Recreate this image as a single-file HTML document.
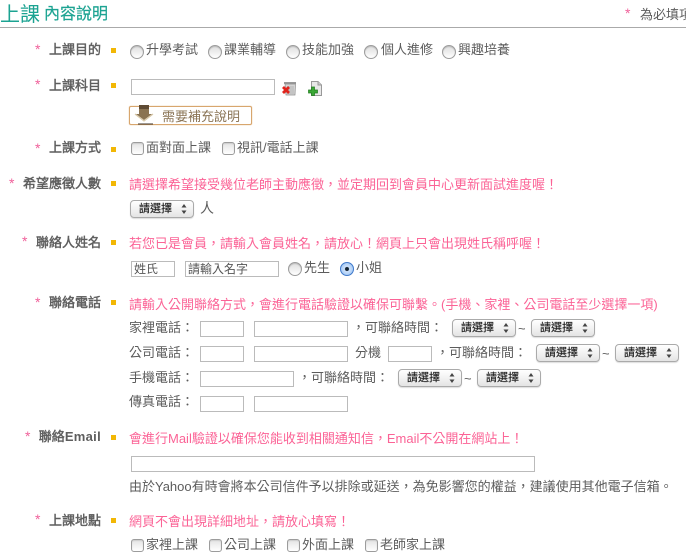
<!DOCTYPE html>
<html lang="zh-Hant">
<head>
<meta charset="utf-8">
<title>上課內容說明</title>
<style>
html,body{margin:0;padding:0;background:#fff;width:686px;height:560px;overflow:hidden}
body{position:relative;font-family:"Liberation Sans","Noto Sans CJK TC",sans-serif;font-size:13px;color:#5c5c5c}
.a,.t,.l,.p,.s,.q,.i,.r,.c,.sel{position:absolute;white-space:nowrap}
.t,.l,.p{height:18px;line-height:18px;margin-top:1px}
.l{right:585px;color:#5e5e5e;text-align:right;-webkit-text-stroke:.45px #5e5e5e}
.l b{letter-spacing:.3px;-webkit-text-stroke:0}
.p{left:129px;color:#fb6396}
.s{width:5px;height:5px;left:111px;background:#f2b705}
.q{color:#f0609a;font-size:14px;width:7px;height:14px;line-height:14px;margin-top:-3px}
.i{box-sizing:border-box;height:16px;border:1px solid #bbb;background:#fff;font-size:12px;line-height:14px;padding-left:2px;color:#555}
.r{box-sizing:border-box;width:14px;height:14px;border-radius:50%;border:1px solid #9c9c9c;background:linear-gradient(#ddd,#fff);box-shadow:inset 0 1px 1px #bbb}
.r.on{border-color:#3f78c9;background:radial-gradient(circle,#123 0,#123 20%,#cfe2fb 28%,#8ebcf0 100%);box-shadow:none}
.c{box-sizing:border-box;width:13px;height:13px;border-radius:3px;border:1px solid #9c9c9c;background:linear-gradient(#e4e4e4,#fff);box-shadow:inset 0 1px 1px #ccc}
.sel{box-sizing:border-box;width:64px;height:18px;border:1px solid #aaa;border-radius:4px;background:linear-gradient(#fff,#f2f2f2 50%,#e4e4e4);box-shadow:0 1px 1px #ddd;font-size:11px;line-height:16px;padding-left:8px;color:#222;-webkit-text-stroke:.15px #222}
.sel svg{position:absolute;left:50px;top:3px}
</style>
</head>
<body>
<span class="t" style="left:0;top:0;height:28px;line-height:28px;font-size:20px;color:#1ca392">上課</span>
<span class="t" style="left:44px;top:2px;height:24px;line-height:24px;font-size:16px;color:#1ca392;-webkit-text-stroke:.2px #1ca392">內容說明</span>
<span class="q" style="left:625px;top:9px">*</span>
<span class="t" style="left:640px;top:5px">為必填項目</span>
<div class="a" style="left:0;top:27px;width:686px;height:1px;background:#aaa"></div>

<span class="q" style="left:35px;top:45px">*</span><span class="l" style="top:40px">上課目的</span><i class="s" style="top:48px"></i>
<i class="r" style="left:130px;top:45px"></i><span class="t" style="left:146px;top:40px">升學考試</span>
<i class="r" style="left:208px;top:45px"></i><span class="t" style="left:224px;top:40px">課業輔導</span>
<i class="r" style="left:286px;top:45px"></i><span class="t" style="left:302px;top:40px">技能加強</span>
<i class="r" style="left:364px;top:45px"></i><span class="t" style="left:381px;top:40px">個人進修</span>
<i class="r" style="left:442px;top:45px"></i><span class="t" style="left:458px;top:40px">興趣培養</span>

<span class="q" style="left:35px;top:80px">*</span><span class="l" style="top:76px">上課科目</span><i class="s" style="top:83px"></i>
<i class="i" style="left:131px;top:79px;width:144px"></i>
<svg class="a" style="left:282px;top:81px" width="15" height="15" viewBox="0 0 15 15"><path d="M2 1h12v2H2z" fill="#999"/><path d="M3 3h10.500L13 14H4z" fill="#d4d4d4" stroke="#8c8c8c" stroke-width=".7"/><path d="M7 5v8M9 5v8M11 5v8" stroke="#aaa" stroke-width=".8"/><path d="M0 7l2-2 2 2 2-2 2 2-2 2 2 2-2 2-2-2-2 2-2-2 2-2z" fill="#e0241c"/></svg>
<svg class="a" style="left:308px;top:81px" width="15" height="15" viewBox="0 0 15 15"><path d="M3.500.5H10L13.500 4v10.500h-10z" fill="#e8e8e8" stroke="#999"/><path d="M10 .5V4h3.500" fill="#ccc" stroke="#999"/><path d="M3.500 6h3v3h3v3h-3v2.500h-3V12H.5V9h3z" fill="#3aa835" stroke="#1f7a1d" stroke-width=".7"/></svg>
<div class="a" style="box-sizing:border-box;left:129px;top:106px;width:123px;height:19px;border:1px solid #d8a66e;border-radius:2px;background:#fff;box-shadow:0 0 1px #d8a66e"></div>
<svg class="a" style="left:134px;top:104px" width="20" height="22" viewBox="0 0 20 22"><path d="M5 1h10v4H5z" fill="#5e4a33"/><path d="M5 5h10v5h3l-8 6-8-6h3z" fill="#8a7352"/><path d="M1 10l9 7 9-7" fill="none" stroke="#d8c8a8" stroke-width="1.200"/><path d="M4 20h15" stroke="#3c3226" stroke-width="1"/></svg>
<span class="t" style="left:162px;top:107px;color:#8a7455">需要補充說明</span>

<span class="q" style="left:35px;top:144px">*</span><span class="l" style="top:138px">上課方式</span><i class="s" style="top:147px"></i>
<i class="c" style="left:131px;top:142px"></i><span class="t" style="left:146px;top:138px">面對面上課</span>
<i class="c" style="left:222px;top:142px"></i><span class="t" style="left:237px;top:138px">視訊/電話上課</span>

<span class="q" style="left:9px;top:179px">*</span><span class="l" style="top:174px">希望應徵人數</span><i class="s" style="top:181px"></i>
<span class="p" style="top:175px">請選擇希望接受幾位老師主動應徵，並定期回到會員中心更新面試進度喔！</span>
<div class="sel" style="left:130px;top:200px">請選擇<svg width="6" height="10"><path d="M3 0l2.500 3.500h-5zM3 10L.5 6.500h5z" fill="#444"/></svg></div>
<span class="t" style="left:200px;top:198px;font-size:14px">人</span>

<span class="q" style="left:22px;top:237px">*</span><span class="l" style="top:233px">聯絡人姓名</span><i class="s" style="top:240px"></i>
<span class="p" style="top:234px">若您已是會員，請輸入會員姓名，請放心！網頁上只會出現姓氏稱呼喔！</span>
<div class="i" style="left:131px;top:261px;width:44px">姓氏</div>
<div class="i" style="left:185px;top:261px;width:94px">請輸入名字</div>
<i class="r" style="left:288px;top:262px"></i><span class="t" style="left:304px;top:258px">先生</span>
<i class="r on" style="left:340px;top:262px"></i><span class="t" style="left:356px;top:258px">小姐</span>

<span class="q" style="left:35px;top:298px">*</span><span class="l" style="top:293px">聯絡電話</span><i class="s" style="top:300px"></i>
<span class="p" style="top:295px">請輸入公開聯絡方式，會進行電話驗證以確保可聯繫。(手機、家裡、公司電話至少選擇一項)</span>

<span class="t" style="left:129px;top:318px">家裡電話：</span>
<i class="i" style="left:200px;top:321px;width:44px"></i><i class="i" style="left:254px;top:321px;width:94px"></i>
<span class="t" style="left:352px;top:318px">，可聯絡時間：</span>
<div class="sel" style="left:452px;top:319px">請選擇<svg width="6" height="10"><path d="M3 0l2.500 3.500h-5zM3 10L.5 6.500h5z" fill="#444"/></svg></div>
<span class="t" style="left:518px;top:319px">~</span>
<div class="sel" style="left:531px;top:319px">請選擇<svg width="6" height="10"><path d="M3 0l2.500 3.500h-5zM3 10L.5 6.500h5z" fill="#444"/></svg></div>

<span class="t" style="left:129px;top:343px">公司電話：</span>
<i class="i" style="left:200px;top:346px;width:44px"></i><i class="i" style="left:254px;top:346px;width:94px"></i>
<span class="t" style="left:355px;top:343px">分機</span>
<i class="i" style="left:388px;top:346px;width:44px"></i>
<span class="t" style="left:436px;top:343px">，可聯絡時間：</span>
<div class="sel" style="left:536px;top:344px">請選擇<svg width="6" height="10"><path d="M3 0l2.500 3.500h-5zM3 10L.5 6.500h5z" fill="#444"/></svg></div>
<span class="t" style="left:602px;top:344px">~</span>
<div class="sel" style="left:615px;top:344px">請選擇<svg width="6" height="10"><path d="M3 0l2.500 3.500h-5zM3 10L.5 6.500h5z" fill="#444"/></svg></div>

<span class="t" style="left:129px;top:368px">手機電話：</span>
<i class="i" style="left:200px;top:371px;width:94px"></i>
<span class="t" style="left:298px;top:368px">，可聯絡時間：</span>
<div class="sel" style="left:398px;top:369px">請選擇<svg width="6" height="10"><path d="M3 0l2.500 3.500h-5zM3 10L.5 6.500h5z" fill="#444"/></svg></div>
<span class="t" style="left:464px;top:369px">~</span>
<div class="sel" style="left:477px;top:369px">請選擇<svg width="6" height="10"><path d="M3 0l2.500 3.500h-5zM3 10L.5 6.500h5z" fill="#444"/></svg></div>

<span class="t" style="left:129px;top:392px">傳真電話：</span>
<i class="i" style="left:200px;top:396px;width:44px"></i><i class="i" style="left:254px;top:396px;width:94px"></i>

<span class="q" style="left:25px;top:432px">*</span><span class="l" style="top:427px">聯絡<b>Email</b></span><i class="s" style="top:435px"></i>
<span class="p" style="top:429px">會進行Mail驗證以確保您能收到相關通知信，Email不公開在網站上！</span>
<i class="i" style="left:131px;top:456px;width:404px"></i>
<span class="t" style="left:129px;top:477px">由於Yahoo有時會將本公司信件予以排除或延送，為免影響您的權益，建議使用其他電子信箱。</span>

<span class="q" style="left:35px;top:515px">*</span><span class="l" style="top:511px">上課地點</span><i class="s" style="top:518px"></i>
<span class="p" style="top:512px">網頁不會出現詳細地址，請放心填寫！</span>
<i class="c" style="left:131px;top:539px"></i><span class="t" style="left:146px;top:535px">家裡上課</span>
<i class="c" style="left:209px;top:539px"></i><span class="t" style="left:224px;top:535px">公司上課</span>
<i class="c" style="left:287px;top:539px"></i><span class="t" style="left:302px;top:535px">外面上課</span>
<i class="c" style="left:365px;top:539px"></i><span class="t" style="left:380px;top:535px">老師家上課</span>
</body>
</html>
